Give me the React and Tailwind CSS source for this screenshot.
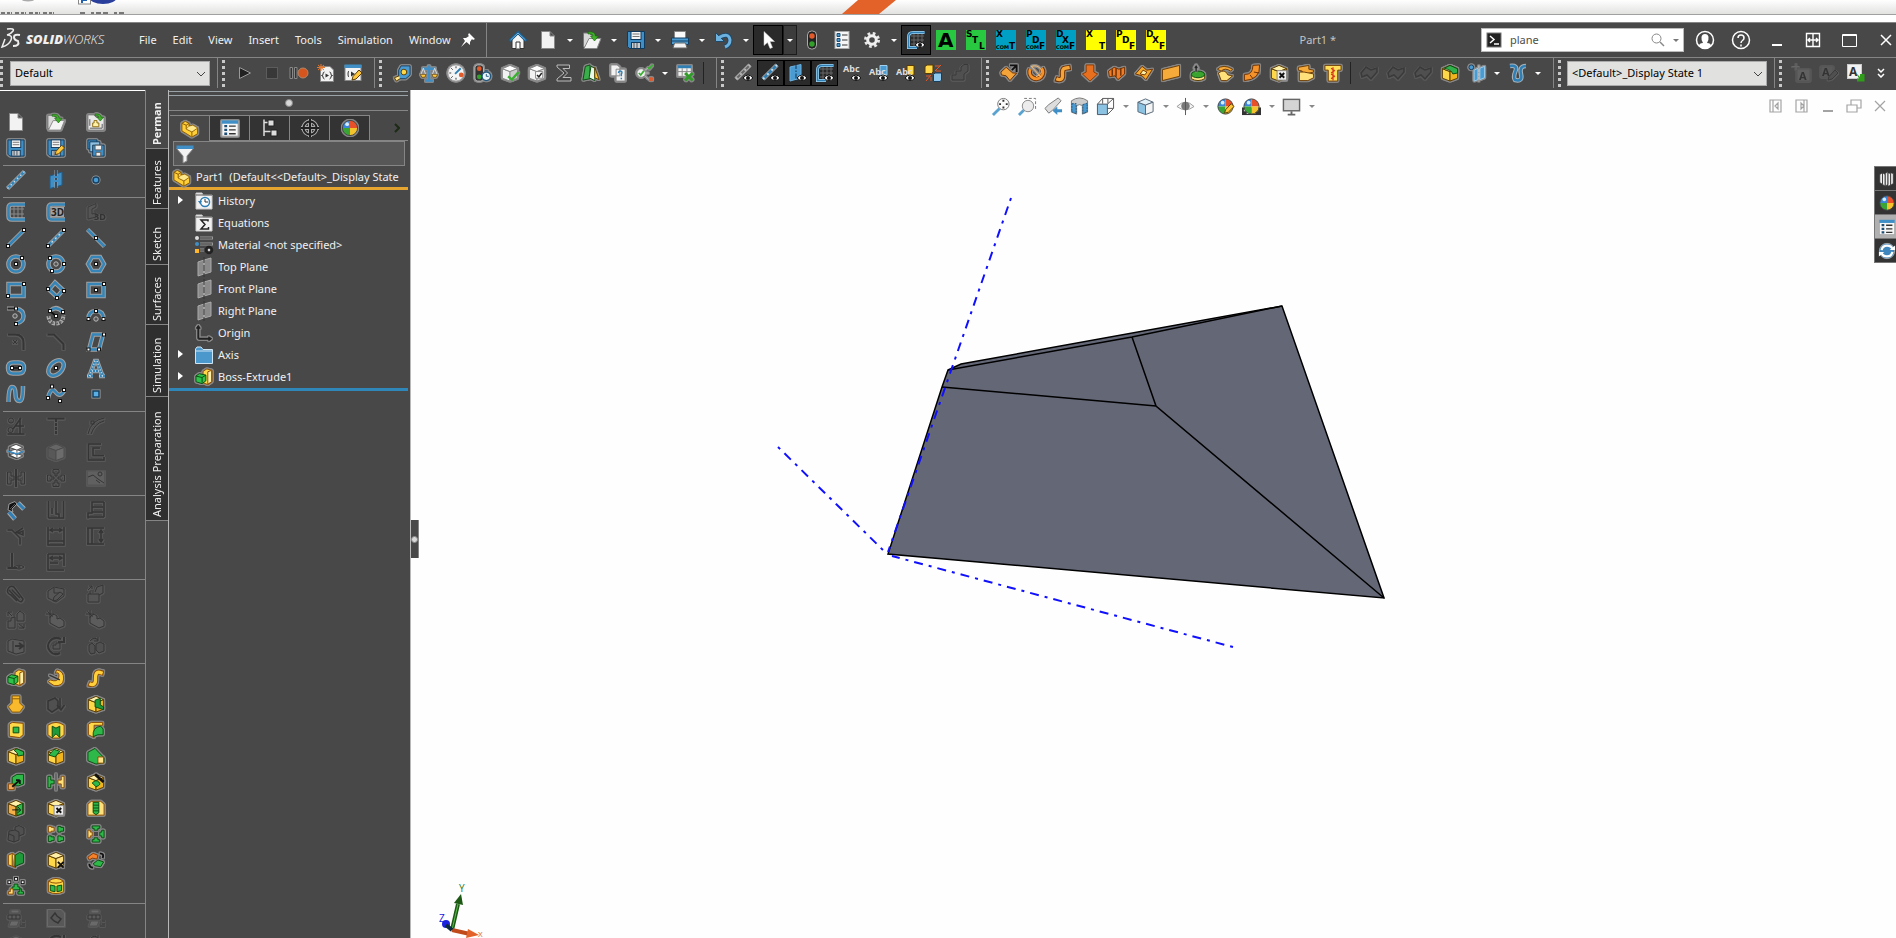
import React from 'react';
import clsx from 'clsx';

// Shared shapes for the solid-looking icons
const Cube = ({ front = '#ffd84a', top = '#fff0a8', side = '#f0b41e', stroke = '#5a3a00' }) => (
  <g stroke={stroke} strokeWidth="1">
    <path d="M2 5.5 10 8.5V18.5L2 15.5Z" fill={front} />
    <path d="M2 5.5 10 2 18 5.5 10 8.5Z" fill={top} />
    <path d="M10 8.5 18 5.5V15.5L10 18.5Z" fill={side} />
  </g>
);

const Eye = () => (
  <g>
    <path d="M9 15q5-6 10 0q-5 5-10 0Z" fill="#fff" stroke="#111" strokeWidth="1" />
    <circle cx="14" cy="15" r="2" fill="#111" />
  </g>
);

// Sketch entity: blue line with a light edge
const Wire = ({ d, dash, transform }) => (
  <g transform={transform}>
    <path d={d} stroke="#a2a2a2" strokeWidth="4.5" />
    <path d={d} stroke="#3585b8" strokeWidth="2.5" />
    {dash && <path d={d} stroke="#c8dce8" strokeWidth="1.5" strokeDasharray={dash} />}
  </g>
);

const Node = ({ x, y }) => <rect x={x - 1.5} y={y - 1.5} width="3" height="3" fill="#fff" stroke="#111" strokeWidth="1" />;

const Center = ({ x, y }) => <circle cx={x} cy={y} r="2.2" fill="#555" stroke="#bbb" strokeWidth="1" />;

const Floppy = () => (
  <g stroke="#123a5c">
    <path d="M1.5 1.5H18.5V18.5H3.5L1.5 16.5Z" fill="#3f8fc6" />
    <rect x="5" y="1.5" width="10" height="8" fill="#f4f4f4" />
    <path d="M6.5 4H13.5M6.5 6.5H13.5" stroke="#777" />
    <rect x="5.5" y="12.5" width="9" height="6" fill="#ccc" />
    <path d="M8 13V18M11 13V18" stroke="#456" />
  </g>
);

const Pencil = () => <path d="M9 17 10 13.5 16 7 19 10 13 16Z" fill="#ffc83c" stroke="#5a3a00" strokeWidth="1" />;

const Ball = () => (
  <g>
    <path d="M10 10V2A8 8 0 0 0 2 10Z" fill="#3a86d8" />
    <path d="M10 10V2A8 8 0 0 1 18 10Z" fill="#e8502a" />
    <path d="M10 10H2A8 8 0 0 0 10 18Z" fill="#3aa536" />
    <path d="M10 10V18A8 8 0 0 0 18 10Z" fill="#f5c42c" />
    <circle cx="7" cy="6" r="2" fill="#d8ecff" />
    <circle cx="10" cy="10" r="8" fill="none" stroke="#444" strokeWidth="1" />
  </g>
);

const Tag = ({ bg, a, b, c, com }) => (
  <g stroke="none" fill="#000" fontFamily="'DejaVu Sans'" fontWeight="700" fontSize="9">
    <rect width="20" height="20" fill={bg} />
    <text x="0" y="7">{a}</text>
    <text x="6" y="13">{b}</text>
    <text x="13" y="19">{c}</text>
    {com && <text x="0" y="19" fontSize="5">COM</text>}
  </g>
);

const SvgText = ({ x, y, size, fill = '#333', children }) => (
  <text x={x} y={y} fontFamily="'Noto Sans'" fontSize={size} fontWeight="700" fill={fill} stroke="none">{children}</text>
);

const ICONS = {
  home: <><path d="M4 9V18.5H16V9L10 4Z" fill="#f5f5f5" stroke="#333" /><path d="M1.5 11 10 2.5 18.5 11" stroke="#1d5f8f" strokeWidth="3" /><path d="M2.5 10 10 3 17.5 10" stroke="#6db7e6" /><path d="M8 18.5V12H12V18.5" fill="#fff" stroke="#333" /></>,
  newDoc: <path d="M3.5 1.5H12L16.5 6V18.5H3.5Z M12 1.5V6H16.5" fill="#f2f2f2" stroke="#888" />,
  open: <><path d="M1.5 17V3H7L9 5H12V17Z" fill="#d8d8d8" stroke="#777" /><path d="M2 18.5 7 8.5H19L15 18.5Z" fill="#f4f4f4" stroke="#888" /><path d="M6 2Q13 1 13.5 6H16.5L12.5 11 8.5 6H11Q11 3.5 6 4Z" fill="#3fae2a" stroke="#155c0a" strokeWidth=".6" /></>,
  openPart: <><path d="M1.5 2.5H8L10 5H18.5V18.5H1.5Z" fill="#e8e8e8" stroke="#777" /><path d="M3.5 7V14M3.5 16.5H16.5V12" stroke="#555" /><path d="M6.5 15V11H8V8.5H11V11H13V15Z" fill="#fff0a8" stroke="#8a6a10" /><path d="M9 1.5Q15 1 15.5 5H18L14.5 9 11 5H13Q13 3 9 3.5Z" fill="#3fae2a" stroke="#155c0a" strokeWidth=".6" /></>,
  save: <Floppy />,
  saveAs: <><Floppy /><Pencil /></>,
  saveAll: <><path d="M1.5 1.5H11V11H1.5Z" fill="#3f8fc6" stroke="#123a5c" /><path d="M3.5 3.5H14V14H3.5Z" fill="#8fc0e2" stroke="#123a5c" /><path d="M6.5 7H18.5V18.5H6.5Z" fill="#3f8fc6" stroke="#123a5c" /><path d="M9 7H16V12H9ZM10 14.5H15V18.5H10Z" fill="#eee" stroke="#555" /></>,
  print: <><path d="M4.5 8V1.5H15.5V8" fill="#fafafa" stroke="#888" /><path d="M1.5 8H18.5V14.5H1.5Z" fill="#4a9bd2" stroke="#153f60" /><path d="M2 11H18" stroke="#153f60" /><path d="M4.5 13H15.5L17 18H3Z" fill="#f2f2f2" stroke="#666" /></>,
  undo: <><path d="M5 7.5Q15 2 16 10Q16 15 11 17" stroke="#1c4a6c" strokeWidth="5" /><path d="M1.5 2.5V11.5H10.5Z" fill="#6db1df" stroke="#1c4a6c" /><path d="M5 7.5Q15 2 16 10Q16 15 11 17" stroke="#6db1df" strokeWidth="3" /></>,
  cursor: <path d="M6 1.5V15.5L9.5 12.5 12 18.5 14.5 17.5 12 11.5H16.5Z" fill="#fff" stroke="#ccc" strokeWidth=".5" />,
  traffic: <><rect x="5.5" y="1" width="9" height="18" rx="4" fill="#222" stroke="#aaa" /><circle cx="10" cy="6" r="2.7" fill="#e2592a" /><circle cx="10" cy="14" r="2.7" fill="#33a02c" /></>,
  options: <><rect x="3" y="1.5" width="14" height="17" fill="#f6f6f6" stroke="#aaa" /><path d="M5 3.5H8V6.5H5ZM5 8.5H8V11.5H5ZM5 13.5H8V16.5H5Z" fill="#4a9bd2" stroke="#1c4e74" /><path d="M10 5H15.5M10 10H15.5M10 15H15.5" stroke="#333" /></>,
  gear: <><circle cx="10" cy="10" r="6.5" stroke="#e8e8e8" strokeWidth="3" strokeDasharray="2.6 2.5" /><circle cx="10" cy="10" r="4.3" stroke="#f0f0f0" strokeWidth="3" /></>,
  sketchEye: <><path d="M5 6H18M5 10H18M5 14H18M8 4V18M12 4V18M16 4V18" stroke="#666" /><path d="M18.5 2.5H7Q2.5 2.5 2.5 7V17.5H11" stroke="#9fd0ee" strokeWidth="3" /><path d="M18.5 2.5H7Q2.5 2.5 2.5 7V17.5H11" stroke="#2f7fb5" strokeWidth="1.5" /><Eye /></>,
  macroA: <g stroke="none"><rect width="20" height="20" fill="#28c840" /><text x="2" y="17" fontFamily="'DejaVu Sans'" fontWeight="700" fontSize="20" fill="#000">A</text></g>,
  stl: <Tag bg="#28c840" a="S" b="T" c="L" />,
  xtCom: <Tag bg="#00a0c4" a="X" c="T" com />,
  pdfCom: <Tag bg="#00a0c4" a="P" b="D" c="F" com />,
  dxfCom: <Tag bg="#00a0c4" a="D" b="X" c="F" com />,
  xt: <Tag bg="#ffff00" a="X" c="T" />,
  pdf: <Tag bg="#ffff00" a="P" b="D" c="F" />,
  dxf: <Tag bg="#ffff00" a="D" b="X" c="F" />,

  // macros
  play: <path d="M4.5 4.5 15.5 10 4.5 15.5Z" fill="#222" stroke="#999" />,
  stop: <rect x="4.5" y="4.5" width="11" height="11" fill="#383838" stroke="#5c5c5c" />,
  record: <><path d="M1 4.5H3.5V15.5H1ZM5.5 4.5H8V15.5H5.5Z" fill="#333" stroke="#888" /><circle cx="14" cy="10" r="5" fill="#d4561e" stroke="#b0886a" /></>,
  script: <><path d="M4.5 3.5H14L17.5 7V18.5H4.5Z" fill="#f2f2f2" stroke="#888" /><path d="M8.500 9Q7 9 7 11T5.5 12.5Q7 12.5 7 14T8.500 16M13.5 9Q15 9 15 11T16.500 12.5Q15 12.5 15 14T13.5 16" stroke="#333" /><path d="M9.5 10.500 13 12.5 9.500 14.5Z" fill="#333" /><path d="M5 1V8M1 4.500H9M2 2 8 7M8 2 2 7" stroke="#e8762a" /></>,
  scriptEdit: <><rect x="2" y="2.5" width="16" height="15" fill="#f2f2f2" stroke="#888" /><rect x="1.5" y="1.5" width="17" height="3.5" fill="#3f8fc6" /><path d="M6 8Q5 8 5 11Q5 14 6 14M14 8Q15 8 15 10" stroke="#333" /><path d="M8 8.5 12 11 8 13.5Z" fill="#333" /><Pencil /></>,

  // evaluate
  measure: <><path d="M6.5 7 9 2.5H18.5V12L14 16H6.500Z" fill="#4a9bd2" stroke="#153f60" /><circle cx="12" cy="9" r="3" fill="#ffd84a" stroke="#5a3a00" /><path d="M7 13 2 15 4 18.5 8 16" fill="#ffe48a" stroke="#5a3a00" /></>,
  mass: <><path d="M10 2V17M6 18H14M3 5.5H17" stroke="#3f8fc6" strokeWidth="2.5" /><path d="M4 5 1.5 11.5H6.5ZM16 5 13.5 11.5H18.5Z" stroke="#ddd" /><path d="M1 11.5H7L5.5 14.5H2.5ZM13 11.5H19L17.5 14.5H14.5Z" fill="#ffc83c" stroke="#5a3a00" strokeWidth=".7" /></>,
  gauge: <><circle cx="10" cy="10" r="8.5" fill="#f5f5f5" stroke="#aaa" /><path d="M10 3V5M3 10H5M5 5 6.5 6.5M5 15 6.5 13.5M10 15V17" stroke="#333" /><path d="M9 11 15 5" stroke="#2f7fb5" strokeWidth="2" /><circle cx="15.5" cy="12" r="2.5" fill="#e2592a" /></>,
  perf: <><rect x="1.5" y="1.5" width="9" height="17" rx="3" fill="#333" stroke="#bbb" /><circle cx="6" cy="5.5" r="2.5" fill="#e2592a" /><circle cx="6" cy="14" r="2.5" fill="#33a02c" /><circle cx="13.5" cy="13.5" r="4.5" fill="#eaf4fb" stroke="#24597f" strokeWidth="1.5" /><path d="M13.5 11V13.5H16M12 7.5H15" stroke="#24597f" /></>,
  cubeCheck: <><Cube front="#f2f2f2" top="#fff" side="#ccc" stroke="#888" /><path d="M8 13.5 12 17 19 9" stroke="#39b030" strokeWidth="2.5" /></>,
  cubeCheck2: <><Cube front="#f2f2f2" top="#fff" side="#ddd" stroke="#888" /><path d="M8.5 8.5H16V15.5H8.5Z" fill="#fff" stroke="#888" /><path d="M10 12 12 14 15 10" stroke="#222" strokeWidth="1.5" /></>,
  sigma: <path d="M15.5 5.5V2H3V4L10 10 3 16V18H17V14.5H9L13.5 10 9 5.5Z" fill="#444" stroke="#bbb" />,
  draft: <><path d="M4 3 9 1.5V16L1.500 17.5Z" fill="#3aae4a" stroke="#0a4a10" /><path d="M10 3 14 5V18L8 15Z" fill="#e8f8e8" stroke="#0a4a10" /><path d="M14 4 18.5 17 14 15Z" fill="#ffc83c" stroke="#5a3a00" /></>,
  docHelp: <><path d="M2.5 1.5H9L12 4V13H2.5ZM8 6H17.5V18.5H8Z" fill="#f2f2f2" stroke="#888" /><path d="M10.5 10Q11 7.5 13 8T13.5 11.5V13.5M13.5 15V16.5" stroke="#2f7fb5" strokeWidth="1.5" /></>,
  checks: <><circle cx="6" cy="10" r="4.5" fill="#f2f2f2" stroke="#888" /><path d="M3.5 10 5.5 12 9 7.5M13 4 14.500 5.5 18 1.5" stroke="#39b030" strokeWidth="1.8" /><path d="M10 10H14M9 12 14 17M10 7 13 5" stroke="#bbb" /><path d="M15 15 18 18M18 15 15 18" stroke="#e2592a" strokeWidth="2" /></>,
  excel: <><rect x="1.5" y="2.5" width="14" height="11" fill="#f2f2f2" stroke="#888" /><rect x="1.5" y="2" width="14" height="3" fill="#2f7fb5" /><path d="M1.5 8.5H15.5M6 5V13M11 5V13" stroke="#888" /><path d="M9 10 17 18M17 10 9 18" stroke="#2f9c28" strokeWidth="3" /></>,

  // hide / show
  axisOffEye: <><path d="M2 16 16 2" stroke="#aaa" strokeWidth="4.5" /><path d="M2 16 16 2" stroke="#666" strokeWidth="2" /><path d="M2 16 16 2" stroke="#bbb" strokeWidth="2" strokeDasharray="2 4" /><Eye /></>,
  axisEye: <><path d="M2 16 16 2" stroke="#999" strokeWidth="4.5" /><path d="M2 16 16 2" stroke="#2f7fb5" strokeWidth="2.5" /><path d="M2 16 16 2" stroke="#c8dce8" strokeWidth="2" strokeDasharray="2 4" /><Eye /></>,
  planeEye: <><path d="M2 4 13 1.5V15L2 18Z" fill="#4a9bd2" stroke="#6db1df" /><path d="M8 1V18" stroke="#103050" strokeDasharray="5 1.5 1.5 1.5" /><Eye /></>,
  abcEye: <><SvgText x={1} y={9} size={9} fill="#ddd">Abc</SvgText><Eye /></>,
  abcBlueEye: <><path d="M11 2.5H18V12H11Z" fill="#4a9bd2" stroke="#9fd0ee" /><SvgText x={0} y={12} size={9} fill="#ddd">Abc</SvgText><Eye /></>,
  abcYellowEye: <><path d="M11 2.5H18V12H11Z" fill="#ffd84a" stroke="#5a3a00" /><SvgText x={0} y={12} size={9} fill="#ddd">Abc</SvgText><Eye /></>,
  swap: <><path d="M2 3.500 4 2H10V9L8.500 10.5H2Z" fill="#ffd84a" stroke="#5a3a00" /><path d="M10.5 11.5 12 10H18.5V17L17 18.5H10.5Z" fill="#8fc8ee" stroke="#153f60" /><path d="M12 8 18 2M12 3 17 3M13 8H18M3 18 8 12M3 13H7M8 14V18" stroke="#e2592a" /></>,
  dimPart: <path d="M2 12H6V8H11V4L14 1.500H18V8L14 11V17H2Z" fill="#505050" stroke="#383838" />,

  // surfaces
  surfExtrude: <><path d="M1.5 9 7 4 14 10 18 10 11 18 7 13 2 12Z" fill="#f5a43a" stroke="#6b2f00" /><path d="M11 2H18V9M18 2 13 7" stroke="#111" strokeWidth="2" /></>,
  surfRevolve: <><path d="M4 6A7 7 0 1 0 16 5" stroke="#6b2f00" strokeWidth="5" /><path d="M4 6A7 7 0 1 0 16 5" stroke="#f5922a" strokeWidth="3" /><path d="M5 3Q12 1 15 6T10 14M5 3 15 14" stroke="#ffc070" /></>,
  surfSweep: <><path d="M2 16Q10 19 9.500 12T12 5L18 4" stroke="#6b2f00" strokeWidth="5.5" /><path d="M3 16Q10 19 9.500 12T12 5L17 4" stroke="#f5a43a" strokeWidth="3.5" /></>,
  surfLoft: <path d="M6 1.500H14V9L18 11 10 18.5 2 11 6 9Z" fill="#e86f1e" stroke="#8a3a00" />,
  surfBoundary: <><path d="M1 8 7 4 12 6 18 4V11L11 17 8 13 2 14Z" fill="#f07c28" stroke="#6b2f00" /><path d="M5 6V13M9 5V14M14 5V13" stroke="#6b2f00" strokeWidth="1.5" /></>,
  surfFill: <><path d="M1 11 8 3 13 7 19 6 12 17 8 13Z" fill="#f5a82a" stroke="#6b2f00" /><path d="M6 11 9 7 13 9 11 12Z" fill="#fff0a8" stroke="#6b2f00" /></>,
  surfPlanar: <path d="M1 6.500 19 2V13.5L1 18Z" fill="#f5aa3a" stroke="#6b3a00" />,
  surfOffset: <><path d="M3 12V16Q10 20 17 16V12Z" fill="#ffe48a" stroke="#5a3a00" /><ellipse cx="10" cy="11.5" rx="7" ry="3.5" fill="#39a52e" stroke="#0a4a10" /><path d="M7 9V5H5.500L8 1 10.5 5H9V9Z" fill="#222" stroke="#aaa" strokeWidth=".5" /></>,
  surfRuled: <><path d="M2 6Q8 0 18 6L16 8Q10 4 6 8Z" fill="#f5aa3a" stroke="#6b3a00" /><path d="M3 10Q10 5 13 12L18 13 12 18H6Z" fill="#ffe07a" stroke="#6b3a00" /></>,
  surfTrim: <><path d="M11 2 18 1.500Q19 17 2 18V11.5Q11 12 11 2Z" fill="#f5922a" stroke="#6b2f00" /><path d="M12 9 18 10M8 12 11 16" stroke="#6b2f00" /></>,
  cubeX: <><Cube /><path d="M8 7.5H18V17.5H8Z" fill="#eee" stroke="#888" /><path d="M10.5 10 15.5 15M15.5 10 10.5 15" stroke="#111" strokeWidth="2" /></>,
  surfThick: <><path d="M2 4 13 2V6L18 7V9L6 12V8L2 7Z" fill="#f5aa3a" stroke="#6b3a00" /><path d="M3 9H8L18 11V15L12 18H3Z" fill="#ffe07a" stroke="#6b3a00" /></>,
  surfKnit: <><path d="M1.5 2H18.5V7H15V18.5H5V7H1.5Z" fill="#ffdf5a" stroke="#6b3a00" /><path d="M10 4V18M8 5 12 8M8 10 12 7M8 11 12 14M8 16 12 13" stroke="#d8381e" strokeWidth="1.3" /></>,
  dimSurf: <path d="M2 10 7 4 12 7 18 5V9L12 16 8 12 3 14Z" fill="#4f4f4f" stroke="#3a3a3a" strokeWidth="1.5" />,
  cubeGreenTop: <><Cube /><path d="M4 5 10 2 18 5.500V10L13 11Q12 7 4 5Z" fill="#2fb04a" stroke="#0a4a10" /></>,
  refPlane: <><circle cx="4" cy="4" r="2.5" fill="#4a9bd2" stroke="#123a5c" /><path d="M7 7 11 5V17L7 18.5ZM13 5 18 3V15L13 17Z" fill="#4a9bd2" stroke="#9fd0ee" /><path d="M12 2V19" stroke="#ccc" strokeDasharray="3 1" /></>,
  curve: <><path d="M2 3Q10 2 7.500 8T7 17Q15 19 13 11T18 3" stroke="#a8b4bc" strokeWidth="4.5" /><path d="M2 3Q10 2 7.500 8T7 17Q15 19 13 11T18 3" stroke="#2f7fb5" strokeWidth="2.5" /></>,
  noteDim: <><path d="M5 6H18V18H5Z" fill="#606060" stroke="#555" /><SvgText x={7} y={17} size={11}>A</SvgText><path d="M4 0V7M0 3.5H7" stroke="#666" /></>,
  noteEditDim: <><path d="M2 3H14V14H2Z" fill="#5a5a5a" stroke="#555" /><SvgText x={3} y={13} size={11}>A</SvgText><path d="M9 17 10 13.5 16 7 19 10 13 16Z" fill="#505050" stroke="#3a3a3a" /></>,
  note: <><rect x="1.5" y="1.5" width="14" height="14" fill="#f2f2f2" stroke="#ccc" /><SvgText x={3} y={13} size={12}>A</SvgText><path d="M10 10 14 14V11H18.5V18.5H11V15.500H13Z" fill="#2f9c1a" /></>,

  // heads-up view
  zoomFit: <><path d="M1 19 8 12" stroke="#5aa2cf" strokeWidth="3" /><circle cx="12" cy="7.5" r="6" fill="#fbfbfb" stroke="#777" /><path d="M12 3V5M12 10V12M7.5 7.5H9.5M14.5 7.5H16.5" stroke="#333" strokeWidth="2" /></>,
  zoomArea: <><path d="M6.5 1.5H18.5V13" stroke="#777" strokeDasharray="3 2" /><path d="M1 19 6 14" stroke="#5aa2cf" strokeWidth="3" /><circle cx="10.5" cy="9.5" r="6" fill="#ececec" stroke="#888" /></>,
  prevView: <><path d="M1 12 5 8 15 1 18 4 9 14 5 17Z" fill="#ddd" stroke="#777" /><path d="M19 13H14V10L9 14.5 14 19V16H19Z" fill="#3f8fc6" /></>,
  section: <><path d="M1.5 4Q10-2 18.5 4V16L13 18V9Q10 7 7 9V18L1.5 16Z" fill="#ccc" stroke="#777" /><path d="M2 7H6.500V17.5L2 15.5ZM13.5 8 18 6.5V15.5L13.5 17.5Z" fill="#4a9bd2" stroke="#24597f" strokeDasharray="2 1" /></>,
  viewOrient: <><path d="M1.500 7.5H12V18.5H1.5Z" fill="#8cc2e2" stroke="#456" /><path d="M1.5 7.5 7 1.5H18.5V12L12 18.5M12 7.5 18.5 1.500M7 1.5V7M12 12H18M12.5 2V7" stroke="#555" /></>,
  displayStyle: <Cube front="#8cc2e2" top="#e2f0f8" side="#f4f4f4" stroke="#567" />,
  hideShow: <><path d="M1 10Q10 1 19 10Q10 17 1 10Z" fill="#f4f4f4" stroke="#999" /><circle cx="10" cy="9.5" r="4.5" fill="#777" /><path d="M10 1V19" stroke="#555" /></>,
  appearance: <><Ball /><Pencil /></>,
  scene: <><path d="M0 11H20V19H0Z" fill="#333" /><path d="M2 13H5V15H2ZM14 13H17V15H14ZM5 16H8V18H5ZM11 16H14V18H11Z" fill="#eee" /><Ball /></>,
  monitor: <><rect x="1.5" y="2.5" width="17" height="12" fill="#d4d4d4" stroke="#666" strokeWidth="1.5" /><path d="M10 15V18M6 18.5H14" stroke="#666" strokeWidth="2" /></>,

  // sketch palette
  axis: <Wire d="M1.5 18.5 18.500 1.5" dash="1.5 3" />,
  plane: <><path d="M4 6 16 2V15L4 18.5Z" fill="#3f8fc6" stroke="#1d5f8f" /><path d="M10 0V20" stroke="#a2a2a2" strokeWidth="3" strokeDasharray="6 2 2 2" /><path d="M10 0V20" stroke="#14324a" strokeWidth="1.5" strokeDasharray="6 2 2 2" /></>,
  point: <><circle cx="10" cy="10" r="4.5" fill="#a2a2a2" /><circle cx="10" cy="10" r="3" fill="#4a9bd2" stroke="#153f60" strokeWidth="1.5" /></>,
  sketch: <><path d="M5 7H18M5 12H18M8 4V16M12 4V16M16 4V16" stroke="#8a8a8a" /><Wire d="M19 2.500H6Q2.500 2.500 2.500 6V14Q2.500 17.500 6 17.500H19" /></>,
  sketch3d: <><Wire d="M19 2.500H6Q2.500 2.500 2.500 6V14Q2.500 17.500 6 17.500H19" /><path d="M5 5H18V15H5Z" fill="#a2a2a2" /><SvgText x={5} y={14} size={10} fill="#222">3D</SvgText></>,
  sketch3dDim: <><path d="M2 5 10 1.5V5L6 7V12L10 11V15L2 17Z" fill="#555" stroke="#3a3a3a" /><SvgText x={8} y={18} size={9}>3D</SvgText></>,
  line: <><Wire d="M2 18 18 2" /><Node x={2} y={18} /><Node x={18} y={2} /></>,
  centerline: <><Wire d="M2 18 18 2" dash="2 3" /><Node x={2} y={18} /><Node x={18} y={2} /></>,
  midline: <><Wire d="M1.500 1.500 18.5 18.5" /><Node x={10} y={10} /></>,
  circle: <><Wire d="M10 2.500A7.5 7.5 0 1 1 9.900 2.500Z" /><Node x={10} y={10} /><Node x={16} y={4} /></>,
  perimCircle: <><Wire d="M10 2.500A7.5 7.5 0 1 1 9.900 2.500Z" /><Center x={10} y={10} /><Node x={4} y={4} /><Node x={18} y={10} /><Node x={6} y={17} /></>,
  polygon: <><Wire d="M6 3H14L18 10 14 17H6L2 10Z" /><Node x={10} y={10} /></>,
  rect: <><Wire d="M2.5 4H17.5V16H2.5Z" /><Node x={2} y={16} /><Node x={18} y={4} /></>,
  rectAngled: <><Wire d="M9 2.500 17 10 11 17 3 9.500Z" /><Node x={2} y={9} /><Node x={18} y={11} /><Node x={11} y={18} /></>,
  rectCenter: <><Wire d="M2.5 4H17.500V16H2.5Z" /><Node x={10} y={10} /><Node x={18} y={4} /></>,
  arcTangent: <><path d="M1 2.500H10" stroke="#a2a2a2" strokeWidth="4" /><path d="M1.500 2.500H10" stroke="#222" strokeWidth="2" /><Wire d="M10 2.500Q17.500 4 17.500 10T10 17.5" /><Center x={9} y={10} /><Node x={10} y={2.5} /><Node x={10} y={18} /></>,
  arcThree: <><path d="M2.500 10Q3 17.500 10 17.500T17.500 9" stroke="#aaa" strokeWidth="4" strokeDasharray="3 1" /><path d="M2.500 10Q3 17.500 10 17.500T17.500 9" stroke="#555" strokeWidth="1.500" strokeDasharray="1.500 2.500" /><Wire d="M4 5Q10-1 17 6" /><path d="M4 5 10 10" stroke="#111" strokeWidth="2" /><Node x={4} y={5} /><Node x={17} y={6} /><Node x={10} y={10} /></>,
  arcCenter: <><Wire d="M2.500 13Q2.500 5 10 5T17.500 13" /><Center x={10} y={13} /><Node x={10} y={5} /><Node x={2.5} y={13} /><Node x={17.5} y={13} /></>,
  parallelogram: <><Wire d="M7 2.5H17L13 17.5H3Z" /><Node x={18} y={2.5} /><Node x={2.5} y={17.5} /><Node x={13} y={17.5} /></>,
  slot: <><Wire d="M7 4.500H13Q18 4.500 18 10T13 15.500H7Q2 15.500 2 10T7 4.500Z" /><path d="M6 10H14" stroke="#222" strokeWidth="2" /><Node x={6} y={10} /><Node x={14} y={10} /></>,
  ellipse: <><Wire transform="rotate(-45 10 10)" d="M1 10A9 6 0 1 1 1 10.100Z" /><Node x={10} y={10} /></>,
  textA: <Wire d="M1 18H7M13 18H19M3.500 18 9 3H11L16.500 18M6 13H14" dash="1 2" />,
  splineN: <Wire d="M2.500 18Q2.500 3 6 3T9.500 10T13.500 17Q17 18 17 2" />,
  splinePts: <><Wire d="M2 14Q5 2 9.500 8T18 7" /><Node x={2} y={14} /><Node x={6} y={2.500} /><Node x={18} y={6} /><Node x={14} y={17} /></>,
  pointSq: <><rect x="5.500" y="5.500" width="9" height="9" fill="#a2a2a2" /><rect x="7" y="7" width="6" height="6" fill="#5aaee6" stroke="#153f60" strokeWidth="1.5" /></>,
  layers: <g fill="#fff" stroke="#333" strokeWidth=".8"><path d="M3 13 11 17 17 14 10 11Z" /><path d="M3 9 11 13 17 10 10 7Z" /><path d="M3 5 11 8 17 5 10 2Z" /><path d="M3 5V14L11 17V8" fill="none" /><path d="M1 9 11 12 18 9" stroke="#3f8fc6" fill="none" strokeWidth="1.5" /></g>,
  smartDim: <><path d="M3 12 9 19M12 3 18 9" stroke="#aaa" strokeWidth="5" /><path d="M3 12 9 19M12 3 18 9" stroke="#2f7fb5" strokeWidth="3" /><path d="M2 10 3 4 9 1.500 11 4 6 9 7 12Z" fill="#111" stroke="#999" /><path d="M4 9 9 4" stroke="#555" /></>,

  // disabled shapes
  dArc: <><path d="M2 2.500H9Q17.500 2.500 17.500 11V18" strokeWidth="2" /><path d="M7 8 11 12M11 8 7 12" /></>,
  dChamfer: <path d="M1.5 2.500H8L17.500 12V18" strokeWidth="2" />,
  dTrim: <><circle cx="5" cy="4.5" r="2.5" /><circle cx="4.5" cy="14" r="2.5" /><path d="M7 13 15 2M14 2V18M1.5 18H18.5M9 10H18" strokeWidth="1.5" /></>,
  dExtend: <><path d="M1.500 2.500H18.5" strokeWidth="2" /><path d="M10 3V19" strokeWidth="2" strokeDasharray="3 1" /></>,
  dCurve: <><path d="M18.5 2Q5 4 2 18M18 5Q9 7 5 18" /><rect x="5" y="5" width="3" height="3" /></>,
  dCube: <Cube front="#585858" top="#666" side="#6c6c6c" stroke="#4c4c4c" />,
  dOffset: <path d="M15 2H2.5V18H18V15M14 6H7V13.5H18" strokeWidth="1.5" />,
  dMirror: <><path d="M1.5 4H5V8H8V12H5V16H1.500ZM18.5 4H15V8H12V12H15V16H18.5Z" /><path d="M10 1V19" strokeWidth="2" /></>,
  dCircPat: <path d="M7 1.5H13V5H11V8H9V5H7ZM7 18.5H13V15H11V12H9V15H7ZM1.5 7V13H5V11H8V9H5V7ZM18.5 7V13H15V11H12V9H15V7Z" />,
  dPicture: <><rect x="1.5" y="3" width="17" height="14" fill="#606060" stroke="#555" /><path d="M2 9 7 7 12 11 18 15M10 12 14 15" /><circle cx="14" cy="6" r="2" /></>,
  dOrd: <path d="M2.5 1V18M10 1V14H13V18H2.5M17.5 1V18H13M6 8V14" strokeWidth="1.5" />,
  dOrdV: <path d="M2 18.5V13H6V2H18M6 7H17M6 12H17M2 17H18M18 2V17" strokeWidth="1.5" />,
  dChamDim: <path d="M1.5 4H6L14 12V18.5M9 7 17 2M12 7 17 5V9Z" strokeWidth="1.5" />,
  dHDim: <path d="M2 1V19H18V1M4 4H16M7 2 4 4 7 6M13 2 16 4 13 6M2 15H18" strokeWidth="1.5" />,
  dVDim: <path d="M1 2H18M1 18H18M2 2V18M6 2V18M15 4V16M13 7 15 4 17 7M13 13 15 16 17 13" strokeWidth="1.5" />,
  dPerp: <><path d="M6 1V16M1.5 16H11" strokeWidth="2" /><path d="M8 15q5-4 10 0q-5 4-10 0Z" /><circle cx="13" cy="15" r="1" /></>,
  dFull: <path d="M2 2H18V14M2 2V18H18M4 6H16M4 11H12M7 4 4 6 7 8M13 4 16 6 13 8" strokeWidth="1.5" />,
  dClip: <path d="M3 6 13 17Q16 19 17 15L8 3Q4 1 2 5T5 11L11 17M6 6 14 14" strokeWidth="1.5" />,
  dAsmEdit: <><path d="M2 7 8 3 18 5V12L10 18 2 14ZM8 4V9H13" fill="#565656" /><path d="M7 17 8 13 14 8 17 10 11 16Z" fill="#555" /></>,
  dAsmOpen: <><path d="M2 18V10H13V18ZM4 10V7M9 8 11 3 17 1V9L13 11" fill="#555" /><path d="M2 6 6 2M3 2H6V5" /></>,
  dAsmMove: <><path d="M2 11H5V8L9 7V18H2ZM11 4 14 1 18 4V11H11Z" fill="#565656" /><path d="M2 2 6 6M2 6V2H6M18 18 13 14M13 18H18V14" /></>,
  dAsmNew: <><path d="M4 7 8 4 11 6V9L14 8 18 11V16L13 18 4 13Z" fill="#5c5c5c" /><path d="M4 0V8M0 4H8M1.5 1.500 6.5 6.5" /></>,
  dBox: <><path d="M2 5 6 3 18 5V16L10 18 2 15ZM7 5V17" fill="#5a5a5a" /><path d="M9 10H16M13 7 17 10 13 13" strokeWidth="2" /></>,
  dRotate: <><path d="M15 3Q8 0 4 5T4 15 14 17M12 6H18V1" strokeWidth="2" /><path d="M7 9H10V7H14V13H7Z" fill="#555" /></>,
  dCylinders: <path d="M3 9 6 7 9 10V17L5 18 3 15ZM10 8 14 6 18 8V15L13 17 10 14ZM4 5Q8 0 12 4M12 1V5H8" fill="#505050" />,
  dCombine: <path d="M3 7 9 6V3L13 1.5 18 4V10L13 12V16L8 18 2 16ZM9 6 13 8V12M3 10 8 12V18" fill="#505050" />,
  dFeature: <path d="M2 7 9 4 12 7V14L6 18 2 15ZM14 4V14M11 11 15 16 18.5 11" fill="#505050" strokeWidth="1.5" />,
  dStack: <><path d="M5 2H13V5H5ZM5 13H13L11 18H3Z" fill="#6a6a6a" stroke="#505050" /><path d="M2 7H14V11H2ZM6 7V11M10 7V11" fill="#5c5c5c" /><path d="M16 13H19M16 16H19M14 18H19" /></>,
  dPartBox: <><path d="M1.5 1.5H15L18.500 5V18.500H1.500Z" fill="#585858" stroke="#6a6a6a" /><path d="M5 10 9 5 11 8 15 11 12 15 8 13Z" strokeWidth="1.500" /></>,

  // features
  fBoss: <><path d="M9 4 13 1.5 18.5 3V15L14 18 9 16Z" fill="#ffd84a" stroke="#8a4a00" /><path d="M14 4.5 18 3V15L14 17.5Z" fill="#fff0a8" stroke="#8a4a00" /><path d="M1.5 9 5 6.500 12 8V14L8 17 1.5 15Z" fill="#2fc24a" stroke="#0a4a10" /><path d="M1.5 9 8 10.5 12 8M8 10.5V16" stroke="#0a4a10" /></>,
  fRevolve: <><path d="M11 1.5Q18.5 3 18 11T8 18L2 14 4 12Q12 15 13 9T9 5Z" fill="#ffd03c" stroke="#8a4a00" /><path d="M3 7 14 12" stroke="#333" strokeWidth="1.5" /></>,
  fSweep: <><path d="M2 16Q10 19 9.500 11T14 4L18 5" stroke="#8a4a00" strokeWidth="5.5" /><path d="M3 16Q10 19 9.500 11T14 4L17 5" stroke="#ffd03c" strokeWidth="3.5" /></>,
  fLoft: <path d="M6 1.500H14V9L18 13 14 18.5H6L2 13 6 9ZM6 4.5H14" fill="#f9b92c" stroke="#8a5a00" />,
  fCut: <><Cube /><path d="M9 6 14.500 4V11L18 13V16L9 13Z" fill="#1f9a3a" stroke="#0a4a10" /></>,
  fHole: <><path d="M3 4 6 2 17.500 3V15L14 18 3 16.5Z" fill="#ffd84a" stroke="#8a4a00" /><path d="M7 7H13V13H7Z" fill="#2fb84a" stroke="#0a4a10" /></>,
  fRevCut: <><path d="M1.5 5Q10-1 18.500 5V15L14 18.500H6L1.5 15Z" fill="#ffd84a" stroke="#8a4a00" /><path d="M6 6 10 8 14 6V18L10 14 6 18Z" fill="#1f9a3a" stroke="#0a4a10" /></>,
  fSweepCut: <><path d="M2 4 5 2H17V5H8V18L2 15Z" fill="#ffd84a" stroke="#8a4a00" /><path d="M7 17Q6 7 15 6L17.500 9V15H12Z" fill="#2fb84a" stroke="#0a4a10" /></>,
  fFillet: <><Cube /><path d="M8 4 11 2.500 18 5.5V9L12 10Q13 7 8 4Z" fill="#2fb84a" stroke="#0a4a10" /></>,
  fChamfer: <><Cube /><path d="M2.500 9 8 3 14 5 9 11Z" fill="#2fb84a" stroke="#0a4a10" /></>,
  fDraft: <><path d="M1.500 6 9 2 18.500 12V17L10 18.500 1.500 15Z" fill="#2fb84a" stroke="#0a4a10" /><path d="M12 11H18V17.500H12Z" fill="#ffe48a" stroke="#8a4a00" /></>,
  fScale: <><path d="M6 5 11 2H18V12L13 14H6Z" fill="#2fb84a" stroke="#0a4a10" /><path d="M2 12H8V18H2Z" fill="#f5aa5a" stroke="#8a4a00" /><path d="M6 15 14 8M14 8H10M14 8V12" stroke="#111" strokeWidth="2" /></>,
  fMirror: <><path d="M1.5 4H4.500V8H8V12H4.500V16H1.5Z" fill="#2fb84a" stroke="#0a4a10" /><path d="M18.5 4H15.500V8H12V12H15.500V16H18.5Z" fill="#ffe07a" stroke="#8a4a00" /><path d="M10 1V19" stroke="#444" /></>,
  fWand: <><Cube /><path d="M6 11Q10 7 13 10T10 15Z" fill="#2fb84a" stroke="#0a4a10" /><path d="M9 2 18 10" stroke="#111" strokeWidth="3" /></>,
  fSplit: <><Cube front="#f5b04a" /><path d="M11 8 17 5V16L11 18Z" fill="#2fb84a" stroke="#0a4a10" /><path d="M6 12H14M12 9 15 12 12 15" stroke="#111" /></>,
  fThread: <><path d="M1.500 6 5 3H15L18.500 6V17.500H1.500Z" fill="#ffe07a" stroke="#8a4a00" /><path d="M7 4H13V15L10 17 7 15ZM7 7H13M7 10H13M7 13H13" fill="#2fb84a" stroke="#0a4a10" /></>,
  fLinPat: <><path d="M2 2H5V3H8V7H5V8H2Z" fill="#ffe07a" stroke="#8a4a00" /><path d="M12 2H15V3H18V7H15V8H12ZM2 12H5V13H8V17H5V18H2ZM12 12H15V13H18V17H15V18H12Z" fill="#2fb84a" stroke="#0a4a10" /></>,
  fCircPat: <><path d="M6 1.5H14V4H12V6H8V4H6ZM6 18.5H14V16H12V14H8V16H6ZM18.5 6V14H16V12H14V8H16V6Z" fill="#2fb84a" stroke="#0a4a10" /><path d="M1.5 6V14H4V12H6V8H4V6Z" fill="#ffe07a" stroke="#8a4a00" /></>,
  fRib: <><path d="M2 5 6 3V16L10 18 2 15ZM6 3 9 5V17" fill="#ffd84a" stroke="#8a4a00" /><path d="M9 5 14 2 18 4V13L13 15 9 17Z" fill="#1f9a3a" stroke="#0a4a10" /></>,
  fDelete: <><Cube side="#ffe07a" /><path d="M12 12 18 18M18 12 12 18" stroke="#111" strokeWidth="2" /></>,
  fFlex: <><path d="M1.500 7 7 3 12 5 11 9 6 8 3 10Z" fill="#f5822a" stroke="#8a3a00" /><path d="M7 14 12 10 18 12 15 17 9 16Z" fill="#2fb84a" stroke="#0a4a10" /><path d="M14 3Q19 3 17 8M3 14Q3 18 7 18" stroke="#111" strokeWidth="2" /></>,
  fSketchPat: <><path d="M8 8H12V11H14V14H6V11H8Z" fill="#2fb84a" stroke="#0a4a10" /><path d="M2 18.5V16H4V13H7V18.5Z" fill="#ffe07a" stroke="#8a4a00" /><path d="M12 18.5V16H14V13H16V16H18V18.5Z" fill="#2fb84a" stroke="#0a4a10" /><Node x={10} y={2.5} /><Node x={3} y={6} /><Node x={17} y={6} /></>,
  fWrap: <><path d="M2 5Q10-1 18 5V16Q10 20 2 16Z" fill="#ffd84a" stroke="#8a4a00" /><path d="M2 5Q10 9 18 5" stroke="#8a4a00" /><path d="M4 9 9 10V16L4 15ZM11 10 16 9V15L11 16Z" fill="#2fb84a" stroke="#0a4a10" /></>,

  // feature manager
  part: <><path d="M1.500 4 5 2 9 4V7L13 6 18 9V15L12 18.500 1.500 12Z" fill="#ffcf3a" stroke="#8a5a00" /><path d="M1.500 4 6 6V10L12 13 18 9M12 13V18M6 6 9 4" stroke="#8a5a00" /><path d="M6 10 9 7 13 6 18 9 12 13Z" fill="#ffe88a" stroke="#8a5a00" strokeWidth=".6" /></>,
  props: <><rect x="1.500" y="2.5" width="17" height="16" fill="#f6f6f6" stroke="#aaa" /><rect x="1.500" y="2" width="17" height="3.5" fill="#3f8fc6" /><path d="M4 8H7M4 12H7M4 16H7" stroke="#1c4e74" strokeWidth="2.5" /><path d="M9 8H16M9 12H16M9 16H16" stroke="#333" strokeWidth="1.5" /></>,
  config: <><path d="M4 1.5V18M4 4.5H9M4 13.5H11" stroke="#ddd" strokeWidth="1.5" /><path d="M8 2H14V8H8ZM11 12H17V18H11Z" fill="#ddd" stroke="#222" /></>,
  target: <><circle cx="10" cy="10" r="6.5" stroke="#aaa" strokeWidth="4" /><path d="M10 1V19M1 10H19" stroke="#aaa" strokeWidth="4" /><circle cx="10" cy="10" r="6.5" stroke="#222" strokeWidth="2" /><path d="M10 1V19M1 10H19" stroke="#222" strokeWidth="2" /></>,
  ball: <Ball />,
  funnel: <><path d="M2 4V5L8 12V19L12 17V12L18 5V4Z" fill="#f2f2f2" stroke="#888" /><path d="M1.5 1.500H18.5V5H1.5Z" fill="#3f8fc6" /></>,
  history: <><path d="M2 4V2H8L9 4H18V18H2Z" fill="#f0f0f0" stroke="#ccc" /><path d="M2 4H18" stroke="#555" /><circle cx="11" cy="11" r="4.500" fill="#fff" stroke="#2f7fb5" strokeWidth="1.5" /><path d="M11 8V11H14" stroke="#333" /><path d="M4 10 6 13 8 10Z" fill="#2f7fb5" /></>,
  equations: <><path d="M2 4V2H8L9 4H18V18H2Z" fill="#f0f0f0" stroke="#ccc" /><path d="M2 4H18" stroke="#555" /><path d="M14 8.5V7H7L11 11.5 7 16H14.5V14" stroke="#222" strokeWidth="1.5" /></>,
  material: <><circle cx="3" cy="3" r="2" fill="#ddd" /><circle cx="3" cy="9" r="2" fill="#3f8fc6" /><rect x="1" y="14" width="4" height="4" fill="#ffb62a" /><path d="M6 3H19M6 9H19M6 15H10" stroke="#999" strokeWidth="3" /><path d="M6 3H18M6 9H18M6 15H10" stroke="#333" strokeWidth="1" /><circle cx="15" cy="15" r="3" stroke="#222" strokeWidth="2.5" /><circle cx="15" cy="15" r="1.2" fill="#ddd" /></>,
  treePlane: <><path d="M4 5 10 3V17L4 19ZM10 3 17 1V15L10 17Z" fill="#8a8a8a" stroke="#aaa" /><path d="M10 0V20" stroke="#333" strokeDasharray="6 2" /></>,
  origin: <><path d="M4 16V4M4 16H16" stroke="#222" strokeWidth="2" /><path d="M2 5 4 2 6 5ZM15 14 18 16 15 18Z" fill="#222" stroke="#222" /></>,
  folder: <path d="M1.5 4 3 2H7L9 4.5H18.5V18.5H1.5Z M1.5 6H18" fill="#4a98cc" stroke="#cfe4f2" />,

  library: <path d="M2 5 5 3V16L2 14ZM5 3 8 5V18L5 16ZM8 4 11 2V16L8 18ZM11 3 14 4V17L11 18ZM14 3 17 4V15L14 17Z" fill="#eee" stroke="#333" strokeWidth=".8" />,
  refresh: <><circle cx="10" cy="10" r="8.5" fill="#3f86bf" stroke="#aaa" /><path d="M4 9Q5 4 10 4T16 8M16 11Q15 16 10 16T4 12" stroke="#fff" strokeWidth="2.5" /><path d="M13 9H19V4ZM7 11H1V16Z" fill="#fff" /></>,
};

// Sketch tools carry their own light edge
const selfEdged = [
  'axis', 'plane', 'point', 'sketch', 'sketch3d', 'line', 'centerline', 'midline', 'circle', 'perimCircle', 'polygon', 'rect', 'rectAngled', 'rectCenter',
  'arcTangent', 'arcThree', 'arcCenter', 'parallelogram', 'slot', 'ellipse', 'textA', 'splineN', 'splinePts', 'pointSq', 'smartDim',
  'config', 'target', 'curve', 'sigma', 'newDoc', 'axisOffEye', 'axisEye', 'planeEye', 'sketchEye',
];

const halos = {
  light: '[filter:drop-shadow(1px_0_0_#8a8a8a)_drop-shadow(-1px_0_0_#8a8a8a)_drop-shadow(0_1px_0_#8a8a8a)_drop-shadow(0_-1px_0_#8a8a8a)]',
  dim: '[filter:drop-shadow(1px_0_0_#585858)_drop-shadow(-1px_0_0_#585858)_drop-shadow(0_1px_0_#585858)]',
  none: '',
};

function Icon({ name, halo = 'none', className = 'w-5 h-5' }) {
  const edge = halo === 'light' && selfEdged.includes(name) ? 'none' : halo;
  return (
    <svg
      viewBox="0 0 20 20"
      fill="none"
      stroke={edge === 'dim' ? '#353535' : undefined}
      className={clsx('shrink-0 overflow-visible', className)}
      aria-hidden="true"
    >
      {/* the outline sits slightly outside, so the shape is scaled in */}
      <g className={halos[edge]} transform={edge === 'light' ? 'translate(.5 .5) scale(.95)' : undefined}>
        {ICONS[name]}
      </g>
    </svg>
  );
}

const Caret = ({ className = 'text-white' }) => (
  <svg viewBox="0 0 6 3" className={clsx('w-[6px] h-[3px]', className)} aria-hidden="true">
    <path d="M0 0H6L3 3Z" fill="currentColor" />
  </svg>
);

const DropArrow = ({ label, boxed }) => (
  <button aria-label={label} className={clsx('w-[14px] shrink-0 flex items-center justify-center', boxed ? 'h-[30px] bg-[#3c3c3c] border border-[#1c1c1c]' : 'h-[27px]')}>
    <Caret />
  </button>
);

const Grip = () => <div className="w-[3px] h-[27px] shrink-0 border-l-3 border-dotted border-[#c8c8c8]" />;

function ToolButton({ name, active, halo = 'none', wide }) {
  return (
    <button
      aria-label={name}
      className={clsx(
        'shrink-0 flex items-center justify-center',
        wide ? 'w-[30px] h-[30px]' : 'w-[27px] h-[26px]',
        active && 'bg-[#2a2a2a] border border-black'
      )}
    >
      <Icon name={name} halo={halo} />
    </button>
  );
}

const ToolGroup = ({ items = [], halo, children }) => (
  <div className="flex items-center shrink-0 h-[30px] border-l border-[#858585] pl-1">
    <Grip />
    <div className="flex items-center pl-[6px]">
      {items.map((n, i) => {
        if (n === '|') return <div key={i} className="w-px h-[22px] mx-1 bg-[#222]" />;
        if (n.startsWith('>')) return <DropArrow key={i} label={n.slice(1)} />;
        const active = n.startsWith('*');
        return <ToolButton key={i} name={n.replace('*', '')} active={active} halo={/dim/i.test(n) ? 'dim' : halo} />;
      })}
      {children}
    </div>
  </div>
);

function Combo({ label, value }) {
  return (
    <div className="relative shrink-0">
      <select aria-label={label} className="appearance-none w-[200px] h-[25px] pl-1 pr-6 bg-[#e1e1e0] border border-[#ababab] text-black text-[11px] outline-none">
        <option>{value}</option>
      </select>
      <svg viewBox="0 0 10 6" className="absolute right-1 top-[10px] w-[10px] h-[6px] pointer-events-none">
        <path d="M1 1 5 5 9 1" fill="none" stroke="#444" />
      </svg>
    </div>
  );
}

const menus = ['File', 'Edit', 'View', 'Insert', 'Tools', 'Simulation', 'Window'];

function Desktop() {
  return (
    <div className="h-[15px] shrink-0 flex bg-linear-to-b from-white to-[#e2e2e1] border-b border-[#a0a0a0]">
      <svg viewBox="0 0 130 14" className="w-[130px] h-[14px] shrink-0">
        <ellipse cx="28" cy="0" rx="6" ry="1.5" fill="#aaa" />
        <ellipse cx="103" cy="-3" rx="14" ry="7" fill="#2a3f9c" />
        <rect x="78.5" y="-4" width="12" height="8" fill="#fff" stroke="#888" />
        <path d="M82 3V0L87 0" stroke="#2060b0" strokeWidth="2" fill="none" />
        <path d="M1 13H56" stroke="#777" strokeWidth="2" strokeDasharray="4 2 3 1 1 3" />
        <path d="M80 13H124" stroke="#777" strokeWidth="2" strokeDasharray="5 6 3 2 5 2" />
      </svg>
      <svg viewBox="0 0 54 14" className="w-[54px] h-[14px] shrink-0 ml-[712px]">
        <path d="M16 0H54L37 14H0Z" fill="#e2622a" />
      </svg>
    </div>
  );
}

function MenuBar() {
  return (
    <header className="h-9 shrink-0 flex items-center border-y border-[#858585] text-[#f0f0f0]">
      <svg viewBox="0 0 22 20" className="w-[22px] h-5 shrink-0 mb-1" fill="none" stroke="#eee" strokeWidth="1.5">
        <path d="M7 1Q15 0 13 3T7 7Q13 7 11 12T2 19L5 11" />
        <path d="M20 7Q14 6 14 9T18 13Q20 18 13 18" strokeWidth="2" />
      </svg>
      <div className="w-[86px] ml-1 shrink-0 text-[13px] italic font-['Open_Sans',sans-serif] whitespace-nowrap">
        <span className="font-extrabold">SOLID</span><span className="font-light">WORKS</span>
      </div>
      <nav className="flex items-center shrink-0 pl-[27px] gap-4">
        {menus.map((m) => <button key={m}>{m}</button>)}
      </nav>
      <button aria-label="Pin menu" className="w-9 h-full shrink-0 flex items-center justify-center border-r border-[#858585]">
        <svg viewBox="0 0 14 14" className="w-[14px] h-[14px]">
          <path d="M8 0 14 6 12 7 11 6 9 9 9 12 5.5 9 0 14 4 8 2 5 5 5 8 3 7 2Z" fill="#fff" />
        </svg>
      </button>
      <div className="flex items-center shrink-0 pl-4">
        <ToolButton name="home" wide />
        {['newDoc', 'open', 'save', 'print', 'undo'].map((n) => (
          <React.Fragment key={n}>
            <ToolButton name={n} wide />
            <DropArrow label={`${n} options`} />
          </React.Fragment>
        ))}
        <ToolButton name="cursor" wide active />
        <DropArrow label="Select options" boxed />
        <ToolButton name="traffic" wide />
        <ToolButton name="options" wide />
        <ToolButton name="gear" wide />
        <DropArrow label="Options menu" />
        <ToolButton name="sketchEye" wide active />
        {['macroA', 'stl', 'xtCom', 'pdfCom', 'dxfCom', 'xt', 'pdf', 'dxf'].map((n) => <ToolButton key={n} name={n} wide />)}
      </div>
      <h1 className="flex-1 text-center pr-4 text-[#c4c4c4]">Part1 *</h1>
      <div className="flex items-center shrink-0 w-[203px] h-6 bg-white border border-[#bbb] px-1">
        <svg viewBox="0 0 16 16" className="w-4 h-4 shrink-0" fill="none">
          <rect x="1" y="1" width="14" height="14" fill="#222" stroke="#777" />
          <path d="M4 4 8 7.5 4 11M8 12H13" stroke="#fff" strokeWidth="1.5" />
        </svg>
        <input aria-label="Search commands" defaultValue="plane" className="flex-1 min-w-0 px-2 text-[#4a4f48] outline-none" />
        <svg viewBox="0 0 14 14" className="w-[14px] h-[14px] shrink-0" fill="none" stroke="#888">
          <circle cx="5.5" cy="5.5" r="4.5" />
          <path d="M9 9 13 13" strokeWidth="1.5" />
        </svg>
        <Caret className="ml-2 text-[#777]" />
      </div>
      <div className="flex items-center shrink-0 pl-[3px]">
        <button aria-label="Account" className="w-9 flex justify-center">
          <svg viewBox="0 0 20 20" className="w-5 h-5" fill="none" stroke="#fff" strokeWidth="1.5">
            <circle cx="10" cy="10" r="8.5" />
            <path d="M4 16Q4 13 8 13Q6 10 6.5 7Q7 4 10 4T13.5 7Q14 10 12 13Q16 13 16 16Q13 18.5 10 18.5T4 16Z" fill="#fff" stroke="none" />
          </svg>
        </button>
        <button aria-label="Help" className="w-9 flex justify-center">
          <svg viewBox="0 0 20 20" className="w-5 h-5" fill="none" stroke="#fff" strokeWidth="1.5">
            <circle cx="10" cy="10" r="8.5" />
            <path d="M7 8Q7 5 10 5T13 8Q13 9.5 11.5 10.5T10 13M10 14.5V16.5" />
          </svg>
        </button>
        <button aria-label="Minimize" className="w-9 flex justify-center">
          <svg viewBox="0 0 16 16" className="w-4 h-4"><path d="M3 12H13V14H3Z" fill="#fff" /></svg>
        </button>
        <button aria-label="Span displays" className="w-9 flex justify-center">
          <svg viewBox="0 0 16 16" className="w-4 h-4" fill="none" stroke="#fff">
            <path d="M1.5 1.5H14.5V14.5H1.5ZM8 1V15M3 8H13M5 6 3 8 5 10M11 6 13 8 11 10" strokeWidth="1.4" />
          </svg>
        </button>
        <button aria-label="Maximize" className="w-9 flex justify-center">
          <svg viewBox="0 0 16 16" className="w-4 h-4" fill="none" stroke="#fff">
            <path d="M1.5 2.5H15.5V14.5H1.5ZM1 3.5H15" />
          </svg>
        </button>
        <button aria-label="Close" className="w-[29px] pl-2 flex justify-center">
          <svg viewBox="0 0 12 12" className="w-3 h-3" stroke="#fff" strokeWidth="1.5"><path d="M1 1 11 11M11 1 1 11" /></svg>
        </button>
      </div>
    </header>
  );
}

const evaluateTools = ['measure', 'mass', 'gauge', 'perf', 'cubeCheck', 'cubeCheck2', 'sigma', 'draft', 'docHelp', 'checks', '>Check options', 'excel', '|'];
const visibilityTools = ['axisOffEye', '*axisEye', '*planeEye', '*sketchEye', 'abcEye', 'abcBlueEye', 'abcYellowEye', 'swap', 'dimPart'];
const surfaceTools = [
  'surfExtrude', 'surfRevolve', 'surfSweep', 'surfLoft', 'surfBoundary', 'surfFill', 'surfPlanar', 'surfOffset', 'surfRuled', 'surfTrim', 'cubeX', 'surfThick', 'surfKnit', '|',
  'dimSurf', 'dimSurf', 'dimSurf', 'cubeGreenTop', 'refPlane', '>Reference geometry', 'curve', '>Curves',
];

function CommandBar() {
  return (
    <div className="h-8 pb-0.5 shrink-0 flex items-center">
      <Grip />
      <div className="px-[7px]"><Combo label="Configuration" value="Default" /></div>
      <ToolGroup items={['play', 'stop', 'record', 'script', 'scriptEdit']} />
      <div className="w-2 shrink-0" />
      <ToolGroup items={evaluateTools} halo="light" />
      <div className="w-2 shrink-0" />
      <ToolGroup items={visibilityTools} />
      <div className="w-2 shrink-0" />
      <ToolGroup items={surfaceTools} halo="light" />
      <div className="w-2 shrink-0" />
      <ToolGroup><div className="pr-[7px]"><Combo label="Display state" value="<Default>_Display State 1" /></div></ToolGroup>
      <ToolGroup items={['noteDim', 'noteEditDim', 'note']}>
        <button aria-label="More commands" className="w-6 flex justify-center">
          <svg viewBox="0 0 8 10" className="w-2 h-[10px]" fill="none" stroke="#fff" strokeWidth="1.5"><path d="M1 1 4 4 7 1M1 6 4 9 7 6" /></svg>
        </button>
      </ToolGroup>
    </div>
  );
}

// null leaves the cell empty
const palette = [
  ['newDoc', 'open', 'openPart', 'save', 'saveAs', 'saveAll'],
  ['axis', 'plane', 'point'],
  ['sketch', 'sketch3d', 'sketch3dDim', 'line', 'centerline', 'midline', 'circle', 'perimCircle', 'polygon', 'rect', 'rectAngled', 'rectCenter',
    'arcTangent', 'arcThree', 'arcCenter', 'dArc', 'dChamfer', 'parallelogram', 'slot', 'ellipse', 'textA', 'splineN', 'splinePts', 'pointSq'],
  ['dTrim', 'dExtend', 'dCurve', 'layers', 'dCube', 'dOffset', 'dMirror', 'dCircPat', 'dPicture'],
  ['smartDim', 'dOrd', 'dOrdV', 'dChamDim', 'dHDim', 'dVDim', 'dPerp', 'dFull', null],
  ['dClip', 'dAsmEdit', 'dAsmOpen', 'dAsmMove', 'dAsmNew', 'dAsmNew', 'dBox', 'dRotate', 'dCylinders'],
  ['fBoss', 'fRevolve', 'fSweep', 'fLoft', 'dFeature', 'fCut', 'fHole', 'fRevCut', 'fSweepCut', 'fFillet', 'fChamfer', 'fDraft', 'fScale', 'fMirror', 'fWand',
    'fSplit', 'cubeX', 'fThread', 'dCombine', 'fLinPat', 'fCircPat', 'fRib', 'fDelete', 'fFlex', 'fSketchPat', 'fWrap', null],
  ['dStack', 'dPartBox', 'dStack', 'dCube', 'dRotate', 'dCylinders'],
];

function Palette() {
  return (
    <aside className="w-[145px] shrink-0 pt-[17px] pl-[3px] overflow-hidden border-t border-white">
      {palette.map((group, i) => (
        <div key={i} className="grid grid-cols-[repeat(3,40px)] pl-[3px] pt-px pb-1 border-b border-[#858585] last:border-b-0">
          {group.map((n, j) => {
            if (!n) return <span key={j} />;
            const dim = /^d[A-Z]/.test(n) || n === 'sketch3dDim';
            return (
              <button key={j} aria-label={n} className="h-[26px] flex items-center">
                <Icon name={n} halo={dim ? 'dim' : 'light'} />
              </button>
            );
          })}
        </div>
      ))}
    </aside>
  );
}

const sideTabs = [
  ['Perman', 'h-[59px]'],
  ['Features', 'h-[60px]'],
  ['Sketch', 'h-14'],
  ['Surfaces', 'h-[60px]'],
  ['Simulation', 'h-[72px]'],
  ['Analysis Preparation', 'h-[124px]'],
];

function SideTabs() {
  return (
    <div role="tablist" className="w-[23px] shrink-0 flex flex-col border-l border-[#858585]">
      {sideTabs.map(([label, h], i) => (
        <button
          key={label}
          role="tab"
          aria-selected={i === 0}
          className={clsx(
            'shrink-0 flex items-center text-left leading-5 border-b border-[#858585] [writing-mode:vertical-rl]',
            h,
            i === 0 ? 'font-bold -ml-px' : 'bg-[#2f2f2f]'
          )}
        >
          <span className="rotate-180 h-full pt-[3px] whitespace-nowrap">{label}</span>
        </button>
      ))}
    </div>
  );
}

const tree = [
  { label: 'History', icon: 'history', expandable: true },
  { label: 'Equations', icon: 'equations' },
  { label: 'Material <not specified>', icon: 'material' },
  { label: 'Top Plane', icon: 'treePlane' },
  { label: 'Front Plane', icon: 'treePlane' },
  { label: 'Right Plane', icon: 'treePlane' },
  { label: 'Origin', icon: 'origin' },
  { label: 'Axis', icon: 'folder', expandable: true },
  { label: 'Boss-Extrude1', icon: 'fBoss', expandable: true },
];

function FeatureManager() {
  return (
    <section className="w-[243px] shrink-0 flex flex-col border-x border-[#b8b8b8] pr-0.5">
      <div className="h-[5px] mt-px border-y border-[#9aa4a8]" />
      <div className="h-[15px] flex items-center justify-center border-b border-[#858585]">
        <div className="w-2 h-2 rounded-full bg-[#d8d8d8] border border-[#888]" />
      </div>
      <div className="h-[30px] pt-1 pl-px flex items-stretch">
        {['part', 'props', 'config', 'target', 'ball'].map((n, i) => (
          <button
            key={n}
            aria-label={n}
            className={clsx('w-10 shrink-0 flex items-center justify-center border-t border-r border-[#858585]', i > 0 && 'bg-[#333] border-b')}
          >
            <Icon name={n} halo="light" />
          </button>
        ))}
        <button aria-label="More tabs" className="flex-1 flex items-center justify-end pr-2 border-b border-[#858585]">
          <svg viewBox="0 0 6 10" className="w-[6px] h-[10px]" fill="none" stroke="#1c2a16" strokeWidth="2"><path d="M1 1 5 5 1 9" /></svg>
        </button>
      </div>
      <div className="flex items-center ml-1 mr-[3px] h-[25px] bg-[#575757] border border-[#858585] pl-px">
        <Icon name="funnel" />
        <input aria-label="Filter tree" className="flex-1 min-w-0 bg-transparent outline-none" />
      </div>
      <div className="flex items-center gap-1 h-6 pt-0.5 pl-[3px] border-b-3 border-[#e5a52e] whitespace-pre">
        <Icon name="part" halo="light" />
        <span>{'Part1  (Default<<Default>_Display State'}</span>
      </div>
      <ul className="border-b-3 border-[#2f86b8]">
        {tree.map((t) => (
          <li key={t.label} className="flex items-center h-[22px]">
            {t.expandable ? (
              <button aria-label={`Expand ${t.label}`} className="w-[25px] shrink-0 flex justify-center pb-[3px] pr-0.5">
                <svg viewBox="0 0 5 8" className="w-[5px] h-2"><path d="M0 0 5 4 0 8Z" fill="#fff" /></svg>
              </button>
            ) : (
              <span className="w-[25px] shrink-0" />
            )}
            <Icon name={t.icon} halo={t.icon === 'origin' || t.icon === 'fBoss' ? 'light' : 'none'} />
            <span className="pl-1">{t.label}</span>
          </li>
        ))}
      </ul>
    </section>
  );
}

function Model() {
  return (
    <svg viewBox="0 0 640 470" className="absolute left-[359px] top-[100px] w-[640px] h-[470px]" fill="none">
      <path d="M178 180 191 174 512 116 614 408 118 364 172 197Z" fill="#646776" stroke="#000" strokeWidth="1.5" />
      <path d="M178 180 362 147 512 116M362 147 386 216 614 408M172 197 386 216" stroke="#000" strokeWidth="1.5" />
      <g stroke="#1010ff" strokeWidth="2" strokeDasharray="3 6 9 6">
        <path d="M241 8 118 362" />
        <path d="M8 257 114 361" />
        <path d="M463 457 122 366" />
      </g>
    </svg>
  );
}

function Triad() {
  return (
    <svg viewBox="0 0 50 48" className="absolute left-[27px] bottom-0 w-[50px] h-12 overflow-visible">
      <path d="M14 40 20 14" stroke="#1c5a14" strokeWidth="4" />
      <path d="M14 40 20 14" stroke="#5ac04a" strokeWidth="1" />
      <path d="M16 13 23 4 25 15Z" fill="#1c5a14" />
      <path d="M14 40 32 44" stroke="#c04a1a" strokeWidth="4" />
      <path d="M30 39 41 45 28 48Z" fill="#e2622a" />
      <circle cx="8" cy="34" r="4" fill="#1a22e0" />
      <path d="M8 35 14 40" stroke="#0a2a40" strokeWidth="4" />
      <text x="21" y="2" fontSize="10" fontFamily="'Open Sans'" fill="#2a7a1a">Y</text>
      <text x="1" y="32" fontSize="10" fontFamily="'Open Sans'" fill="#1a22e0">Z</text>
      <text x="40" y="47" fontSize="8" fontFamily="'Open Sans'" fill="#e2622a">X</text>
    </svg>
  );
}

const docButtons = [
  ['Previous pane', 'M2 2H13V14H2ZM5 2V14M10 5 7 8 10 11Z'],
  ['Next pane', 'M2 2H13V14H2ZM10 2V14M7 5 10 8 7 11Z'],
  ['Minimize document', 'M3 12.5H13M3 13.5H13'],
  ['Restore document', 'M1 7H11V14H1ZM5 7V2H15V10H11'],
  ['Close document', 'M3 3 13 13M13 3 3 13'],
];

const viewTools = ['zoomFit', 'zoomArea', 'prevView', 'section', 'viewOrient', '>', 'displayStyle', '>', 'hideShow', '>', 'appearance', 'scene', '>', 'monitor', '>'];

function Viewport() {
  return (
    <main className="flex-1 min-w-0 relative bg-[#fefefe] overflow-hidden">
      <div className="flex justify-center items-center h-8">
        {viewTools.map((n, i) => n === '>' ? (
          <button key={i} aria-label="View options" className="w-[14px] flex justify-center"><Caret className="text-[#888]" /></button>
        ) : (
          <button key={i} aria-label={n} className="w-[26px] flex justify-center"><Icon name={n} className="w-[19px] h-[19px]" /></button>
        ))}
      </div>
      <div className="absolute right-2 top-2 flex gap-[10px]">
        {docButtons.map(([label, d]) => (
          <button key={label} aria-label={label}>
            <svg viewBox="0 0 16 16" className="w-4 h-4" fill="none" stroke="#a3a3a3"><path d={d} strokeWidth="1.2" /></svg>
          </button>
        ))}
      </div>
      <Model />
      <Triad />
      {/* splitter handle */}
      <button aria-label="Collapse panel" className="absolute left-0 top-[430px] w-2 h-[38px] bg-[#484848] border-r border-[#858585] flex items-center justify-center">
        <span className="w-[7px] h-[7px] shrink-0 rounded-full bg-[#d8d8d8] border border-[#888]" />
      </button>
      <div className="absolute right-0 top-[76px] w-[22px] flex flex-col border-l border-t border-[#777] bg-[#333]">
        {['library', 'ball', 'props', 'refresh'].map((n) => (
          <button key={n} aria-label={n} className={clsx('h-6 flex items-center pl-[3px] border-b border-[#777] overflow-hidden', n === 'props' && 'bg-[#b0b0b0]')}>
            <Icon name={n} className="w-[18px] h-[18px]" />
          </button>
        ))}
      </div>
    </main>
  );
}

const App = () => {
  return (
    <div className="h-screen flex flex-col overflow-hidden bg-white text-[11px] font-['Noto_Sans','Open_Sans',sans-serif]">
      <Desktop />
      <div className="h-[7px] shrink-0" />
      <div className="flex-1 min-h-0 flex flex-col bg-[#484848] text-[#f0f0f0]">
        <MenuBar />
        <CommandBar />
        <div className="flex-1 min-h-0 flex">
          <Palette />
          <SideTabs />
          <FeatureManager />
          <Viewport />
        </div>
      </div>
    </div>
  );
};

export default App;
